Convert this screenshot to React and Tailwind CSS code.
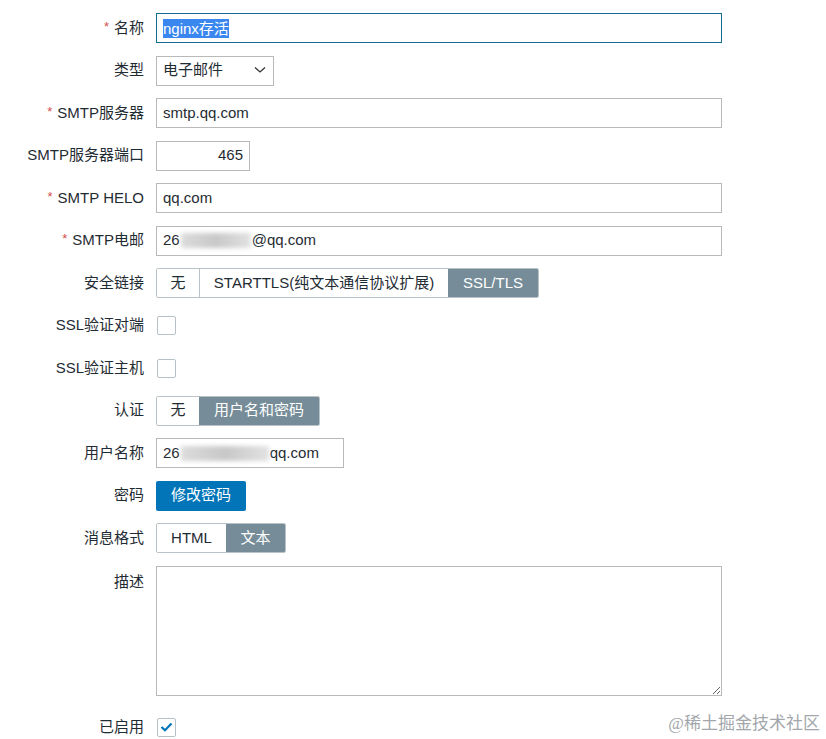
import React from "react";

const Label = ({ children, required, top }) => (
  <div
    className={`w-[144px] shrink-0 text-right text-[15px] text-[#1f2c33] ${
      top ? "self-start pt-[5px]" : ""
    }`}
  >
    {required && <span className="text-[#d64e4e] text-[13px] mr-[5px] align-top">*</span>}
    {children}
  </div>
);

const Row = ({ label, required, top, children, className = "" }) => (
  <div className={`flex items-center min-h-[30px] ${className}`}>
    <Label required={required} top={top}>
      {label}
    </Label>
    <div className="ml-[12px] flex items-center">{children}</div>
  </div>
);

const TextBox = ({ value, width = "w-[566px]", right, blur }) => (
  <div
    className={`${width} h-[30px] border border-[#b9b9b9] bg-white px-[6px] flex items-center text-[15px] text-[#1f2c33] ${
      right ? "justify-end" : ""
    }`}
  >
    {blur ? blur : value}
  </div>
);

const Blurred = ({ head, tail, blurW }) => (
  <span className="flex items-center">
    <span>{head}</span>
    <span className={`inline-block h-[15px] ${blurW} bg-gradient-to-r from-[#dcdcdc] via-[#c8c8c8] to-[#e2e2e2] blur-[2px] mx-[1px]`} />
    <span>{tail}</span>
  </span>
);

const Segmented = ({ items, active }) => (
  <div className="flex h-[30px] border border-[#b9c2c6] rounded-[2px] overflow-hidden text-[15px]">
    {items.map(([text, w], i) => (
      <div
        key={text}
        className={`${w} flex items-center justify-center ${
          i === active
            ? "bg-[#768d99] text-white"
            : "bg-white text-[#1f2c33]"
        } ${i < items.length - 1 && i !== active && i + 1 !== active ? "border-r border-[#b9c2c6]" : ""}`}
      >
        {text}
      </div>
    ))}
  </div>
);

const Checkbox = ({ checked }) => (
  <div className="ml-[1px] w-[19px] h-[19px] border border-[#b6c0c5] rounded-[2px] bg-white flex items-center justify-center">
    {checked && (
      <svg width="13" height="10" viewBox="0 0 13 10">
        <path d="M1.5 5 L5 8.3 L11.5 1.5" fill="none" stroke="#0275b8" strokeWidth="2.2" />
      </svg>
    )}
  </div>
);

export default function App() {
  return (
    <div className="relative w-[826px] h-[739px] bg-white overflow-hidden font-['Liberation_Sans','Noto_Sans_CJK_SC',sans-serif]">
      <div className="flex flex-col gap-[12.5px] pt-[13px]">
        <Row label="名称" required>
          <div className="w-[566px] h-[30px] border border-[#146b93] bg-white px-[6px] flex items-center text-[15px]">
            <span className="bg-[#3a87f0] text-white leading-[19px]">nginx存活</span>
          </div>
        </Row>
        <Row label="类型">
          <div className="w-[118px] h-[30px] border border-[#b9b9b9] bg-white pl-[6px] pr-[6px] flex items-center justify-between text-[15px] text-[#1f2c33]">
            <span>电子邮件</span>
            <svg width="12" height="8" viewBox="0 0 12 8" className="mr-[1px] mb-[2px]">
              <path d="M1 1.5 L6 6 L11 1.5" fill="none" stroke="#333" strokeWidth="1.3" />
            </svg>
          </div>
        </Row>
        <Row label="SMTP服务器" required>
          <TextBox value="smtp.qq.com" />
        </Row>
        <Row label="SMTP服务器端口">
          <TextBox value="465" width="w-[94px]" right />
        </Row>
        <Row label="SMTP HELO" required>
          <TextBox value="qq.com" />
        </Row>
        <Row label="SMTP电邮" required>
          <TextBox blur={<Blurred head="26" tail="@qq.com" blurW="w-[70px]" />} />
        </Row>
        <Row label="安全链接">
          <Segmented
            items={[
              ["无", "w-[43px]"],
              ["STARTTLS(纯文本通信协议扩展)", "w-[248px]"],
              ["SSL/TLS", "w-[90px]"],
            ]}
            active={2}
          />
        </Row>
        <Row label="SSL验证对端" className="h-[30px]">
          <Checkbox />
        </Row>
        <Row label="SSL验证主机" className="h-[30px]">
          <Checkbox />
        </Row>
        <Row label="认证">
          <Segmented
            items={[
              ["无", "w-[42px]"],
              ["用户名和密码", "w-[120px]"],
            ]}
            active={1}
          />
        </Row>
        <Row label="用户名称">
          <TextBox
            width="w-[188px]"
            blur={<Blurred head="26" tail="qq.com" blurW="w-[88px]" />}
          />
        </Row>
        <Row label="密码">
          <div className="w-[90px] h-[30px] rounded-[2px] bg-[#0275b8] text-white text-[15px] flex items-center justify-center">
            修改密码
          </div>
        </Row>
        <Row label="消息格式">
          <Segmented
            items={[
              ["HTML", "w-[69px]"],
              ["文本", "w-[59px]"],
            ]}
            active={1}
          />
        </Row>
        <Row label="描述" top>
          <textarea
            readOnly
            className="block w-[566px] h-[130px] border border-[#b9b9b9] bg-white outline-none"
          />
        </Row>
        <Row label="已启用" className="mt-[4px]">
          <Checkbox checked />
        </Row>
      </div>
      <div className="absolute right-[6px] top-[711px] text-[17px] text-[#a3a7ab] font-['Liberation_Serif','Noto_Sans_CJK_SC',serif]">
        @稀土掘金技术社区
      </div>
    </div>
  );
}
